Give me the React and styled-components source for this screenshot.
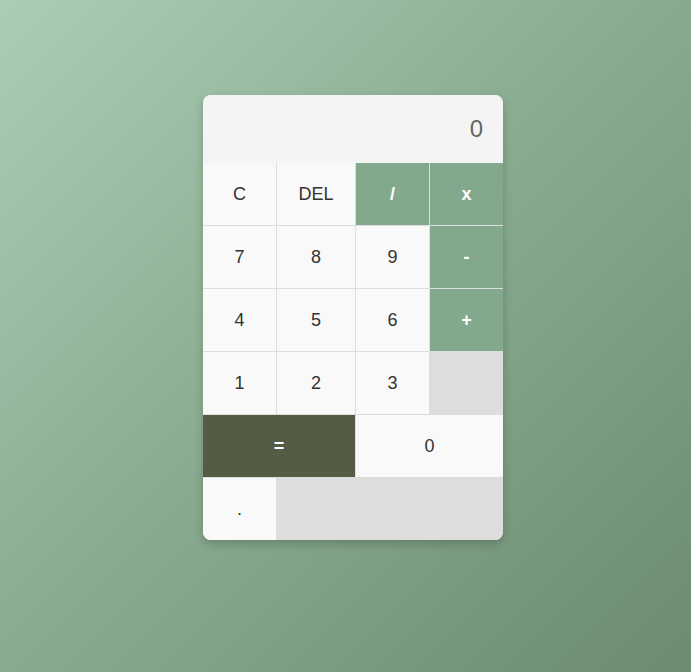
import styled, { createGlobalStyle } from "styled-components";

const GlobalStyle = createGlobalStyle`
  html, body {
    margin: 0;
    height: 100%;
  }
  body {
    font-family: "Liberation Sans", Arial, sans-serif;
    background: linear-gradient(135deg, #aacdb5 0%, #88ab8f 50%, #6c8b70 100%);
    background-attachment: fixed;
  }
`;

const keys = [
  { label: "C" },
  { label: "DEL" },
  { label: "/", kind: "op" },
  { label: "x", kind: "op" },
  { label: "7" },
  { label: "8" },
  { label: "9" },
  { label: "-", kind: "op" },
  { label: "4" },
  { label: "5" },
  { label: "6" },
  { label: "+", kind: "op" },
  { label: "1" },
  { label: "2" },
  { label: "3" },
  { label: "=", kind: "equals", span: 2 },
  { label: "0", span: 2 },
  { label: "." },
];

export default function App() {
  return (
    <>
      <GlobalStyle />
      <Page>
        <Calculator>
          <Display>0</Display>
          <Keypad>
            {keys.map((key) => (
              <Key key={key.label} $kind={key.kind} $span={key.span}>
                {key.label}
              </Key>
            ))}
          </Keypad>
        </Calculator>
      </Page>
    </>
  );
}

const Page = styled.div`
  min-height: 672px;
  display: flex;
  justify-content: center;
  align-items: flex-start;
  padding: 95px 0 0 15px;
  box-sizing: border-box;
`;

const Calculator = styled.div`
  width: 300px;
  border-radius: 8px;
  overflow: hidden;
  background: #dddddd;
  box-shadow: 0 4px 10px rgba(0, 0, 0, 0.2);
`;

const Display = styled.div`
  height: 68px;
  display: flex;
  align-items: center;
  justify-content: flex-end;
  padding: 0 20px;
  background: #f4f4f4;
  color: #666666;
  font-size: 24px;
`;

const Keypad = styled.div`
  display: grid;
  grid-template-columns: 73fr 78fr 73fr 73fr;
  grid-auto-rows: 62px;
  gap: 1px;
  background: #dddddd;
`;

const keyColors = {
  op: { bg: "#83a88b", fg: "#ffffff", weight: 700 },
  equals: { bg: "#545c46", fg: "#ffffff", weight: 700 },
  default: { bg: "#f9f9f9", fg: "#333333", weight: 400 },
};

const Key = styled.button`
  grid-column: span ${(p) => p.$span || 1};
  border: none;
  margin: 0;
  padding: 0;
  font-family: inherit;
  font-size: 18px;
  font-weight: ${(p) => keyColors[p.$kind || "default"].weight};
  color: ${(p) => keyColors[p.$kind || "default"].fg};
  background: ${(p) => keyColors[p.$kind || "default"].bg};
  cursor: pointer;
`;
